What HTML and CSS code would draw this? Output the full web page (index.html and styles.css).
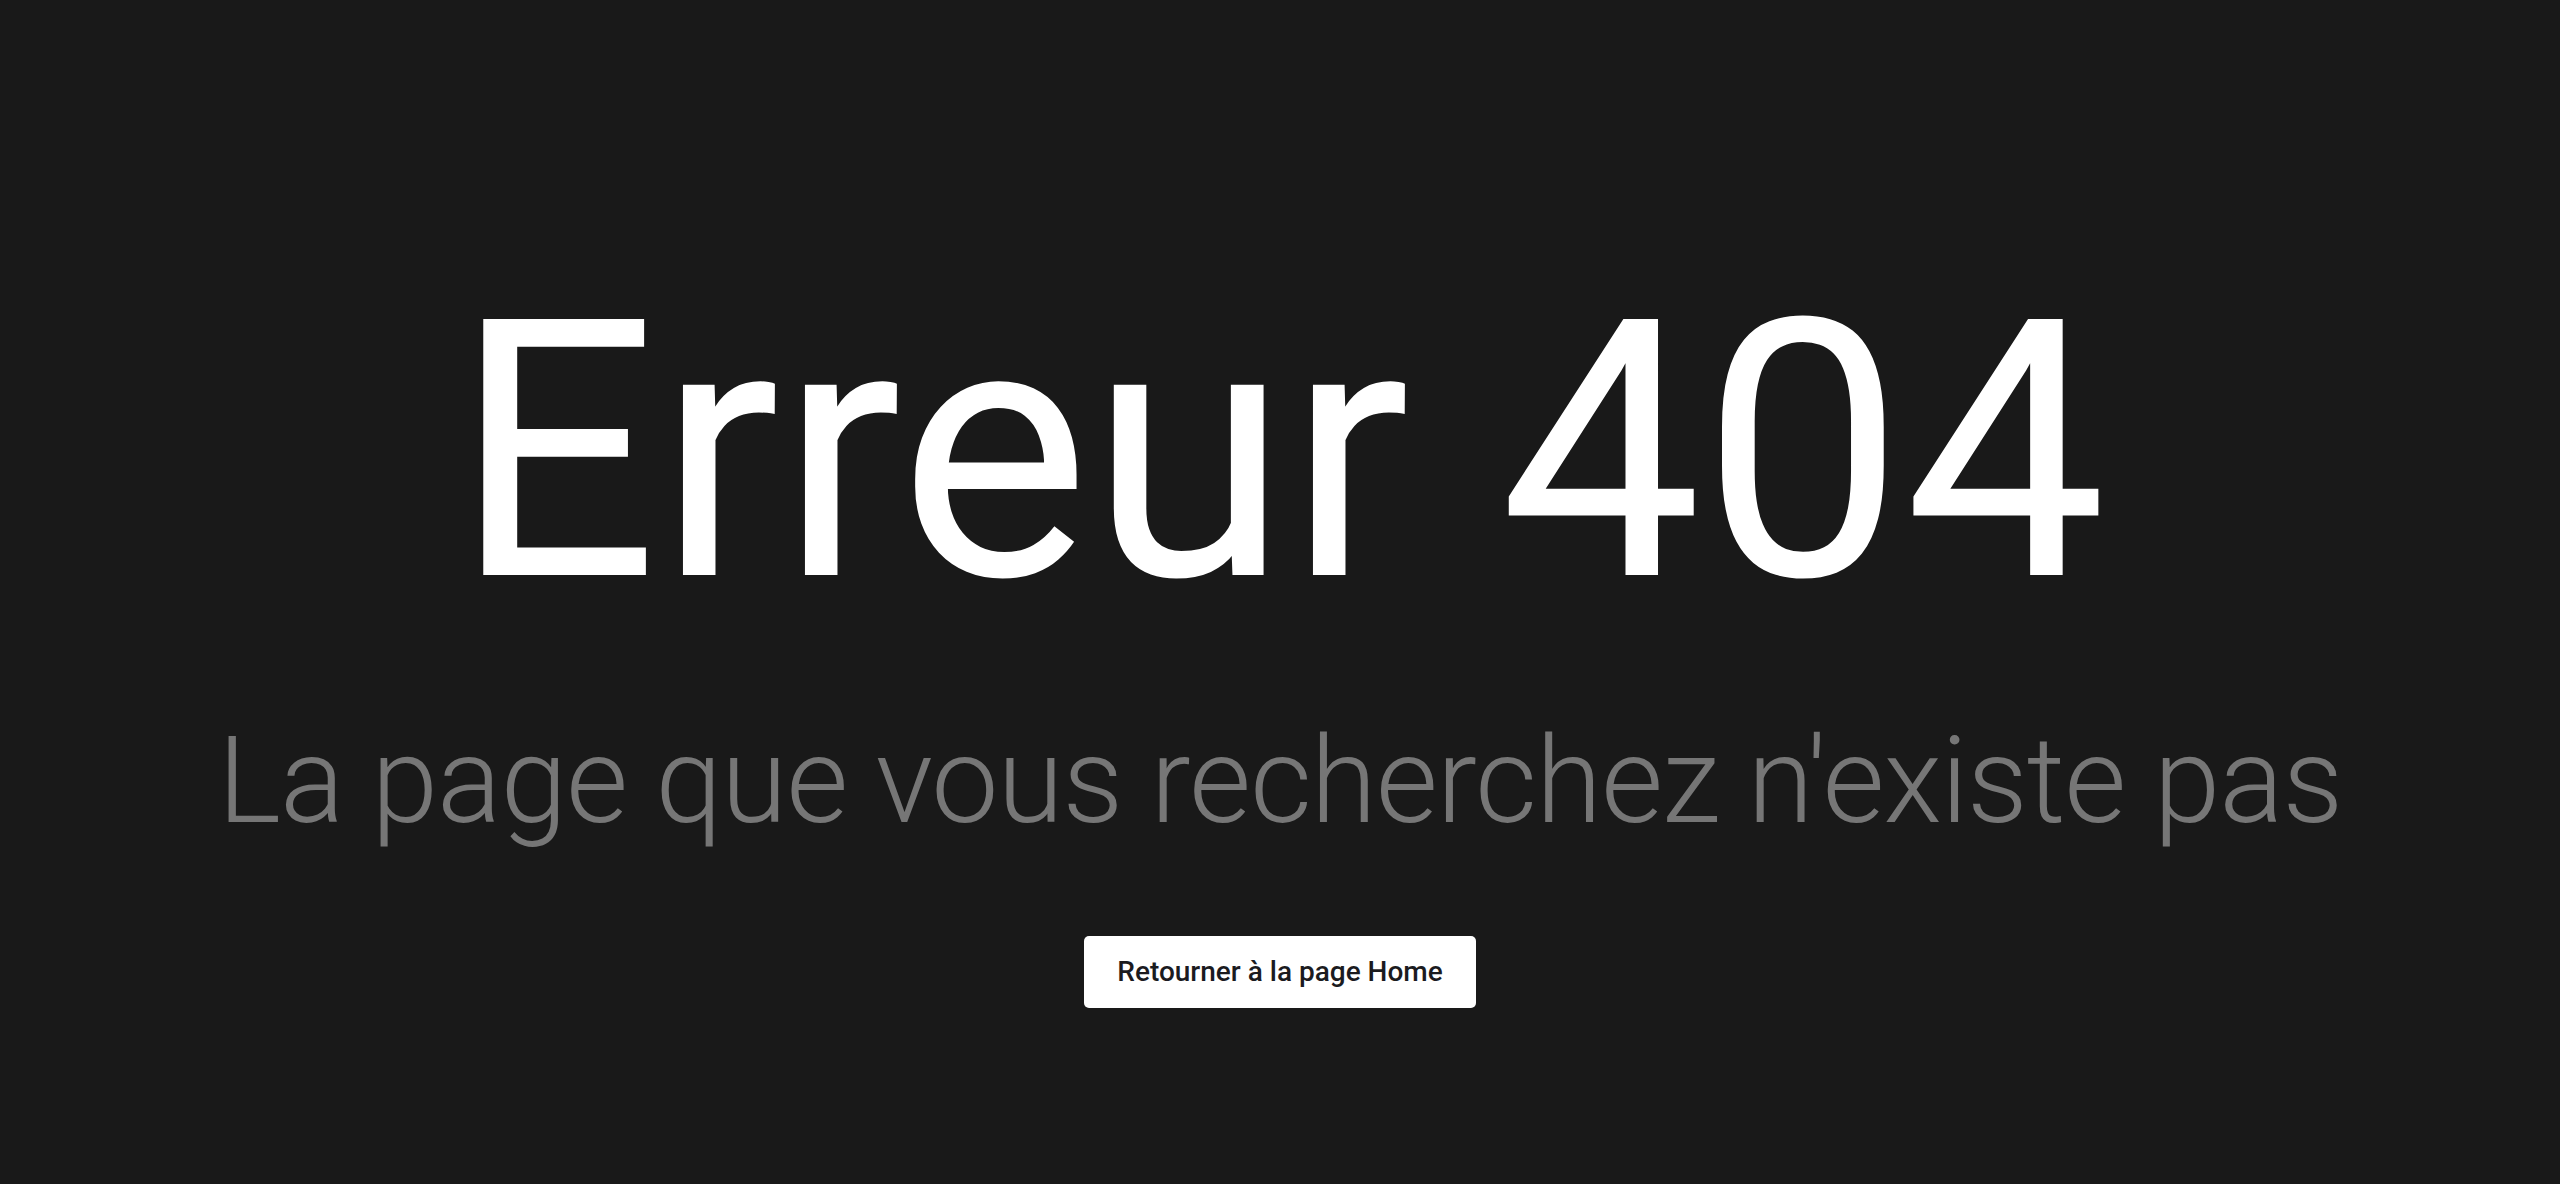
FILE: index.html
```html
<!DOCTYPE html>
<html lang="fr">
<head>
<meta charset="utf-8">
<title>Erreur 404</title>
<link rel="stylesheet" href="styles.css">
</head>
<body>
<main class="page">
  <h1 class="title">Erreur 404</h1>
  <p class="subtitle">La page que vous recherchez n'existe pas</p>
  <a class="home-btn" href="#">Retourner à la page Home</a>
</main>
</body>
</html>
```

FILE: styles.css
```css
html, body {
  margin: 0;
  padding: 0;
  height: 100%;
}
body {
  background: #191919;
  font-family: Roboto, "Liberation Sans", sans-serif;
}
.page {
  display: flex;
  flex-direction: column;
  align-items: center;
  padding-top: 272px;
}
.title {
  margin: 0;
  font-size: 360px;
  line-height: 1;
  font-weight: 400;
  color: #ffffff;
}
.subtitle {
  margin: 89px 0 0;
  font-size: 120px;
  line-height: 1;
  font-weight: 300;
  letter-spacing: -1px;
  color: #767676;
}
.home-btn {
  margin-top: 95px;
  display: inline-block;
  background: #ffffff;
  color: #1b1b1f;
  text-decoration: none;
  font-size: 28px;
  font-weight: 500;
  line-height: 42px;
  padding: 15px 33px;
  border-radius: 5px;
}
```
